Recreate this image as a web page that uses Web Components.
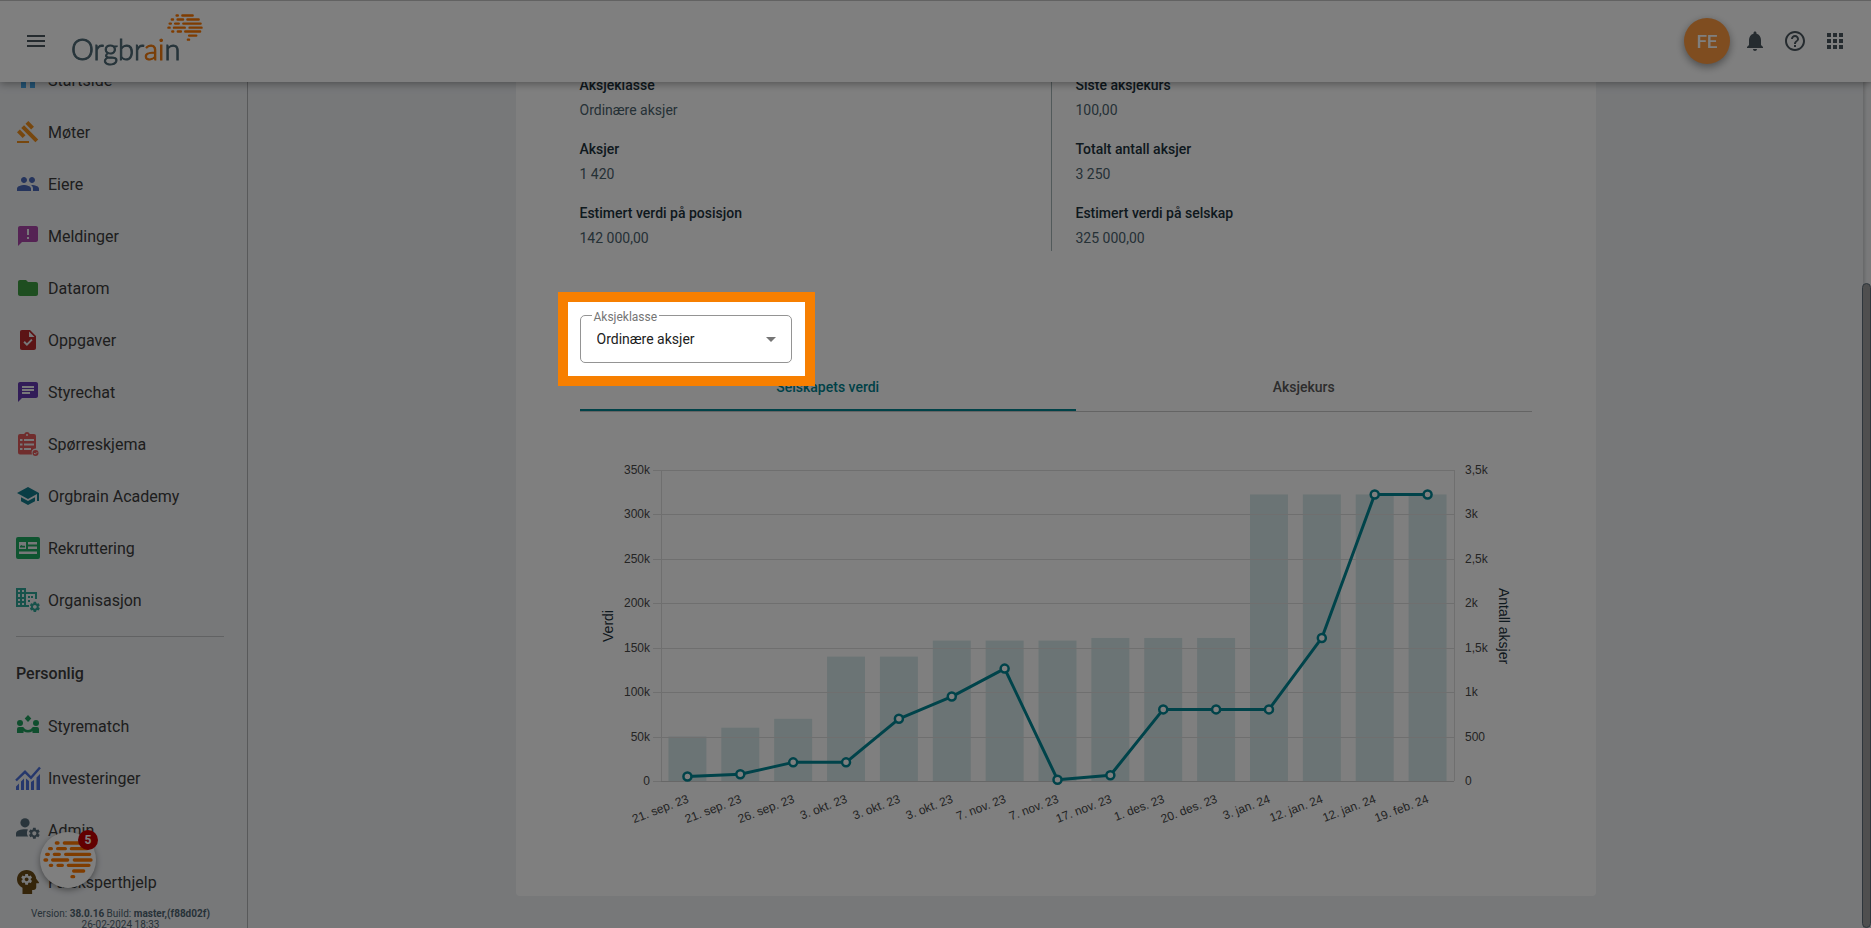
<!DOCTYPE html>
<html lang="nb">
<head>
<meta charset="utf-8">
<meta name="viewport" content="width=device-width, initial-scale=1">
<title>Orgbrain</title>
<style>
  html, body { height: 100%; margin: 0; }
  body { font-family: Roboto, "Liberation Sans", sans-serif; font-size: 14px; color: #263238; overflow: hidden; }
</style>
</head>
<body>
<ob-app></ob-app>
<chat-launcher count="5"></chat-launcher>
<tour-spotlight></tour-spotlight>

<script>
const GEAR = 'M19.14 12.94c.04-.3.06-.61.06-.94 0-.32-.02-.64-.07-.94l2.03-1.58c.18-.14.23-.41.12-.61l-1.92-3.32c-.12-.22-.37-.29-.59-.22l-2.39.96c-.5-.38-1.03-.7-1.62-.94l-.36-2.54c-.04-.24-.24-.41-.48-.41h-3.84c-.24 0-.43.17-.47.41l-.36 2.54c-.59.24-1.13.57-1.62.94l-2.39-.96c-.22-.08-.47 0-.59.22L2.74 8.87c-.12.21-.08.47.12.61l2.03 1.58c-.05.3-.09.63-.09.94s.02.64.07.94l-2.03 1.58c-.18.14-.23.41-.12.61l1.92 3.32c.12.22.37.29.59.22l2.39-.96c.5.38 1.03.7 1.62.94l.36 2.54c.05.24.24.41.48.41h3.84c.24 0 .44-.17.47-.41l.36-2.54c.59-.24 1.13-.56 1.62-.94l2.39.96c.22.08.47 0 .59-.22l1.92-3.32c.12-.22.07-.47-.12-.61l-2.01-1.58zM12 15.6c-1.98 0-3.6-1.62-3.6-3.6s1.62-3.6 3.6-3.6 3.6 1.62 3.6 3.6-1.62 3.6-3.6 3.6z';

const ICONS = {
  menu: '<path d="M3 18h18v-2H3v2zm0-5h18v-2H3v2zm0-7v2h18V6H3z"/>',
  bell: '<path d="M12 22c1.1 0 2-.9 2-2h-4c0 1.1.89 2 2 2zm6-6v-5c0-3.07-1.64-5.64-4.5-6.32V4c0-.83-.67-1.5-1.5-1.5s-1.5.67-1.5 1.5v.68C7.63 5.36 6 7.92 6 11v5l-2 2v1h16v-1l-2-2z"/>',
  help: '<path d="M11 18h2v-2h-2v2zm1-16C6.48 2 2 6.48 2 12s4.48 10 10 10 10-4.48 10-10S17.52 2 12 2zm0 18c-4.41 0-8-3.59-8-8s3.59-8 8-8 8 3.59 8 8-3.59 8-8 8zm0-14c-2.21 0-4 1.79-4 4h2c0-1.1.9-2 2-2s2 .9 2 2c0 2-3 1.75-3 5h2c0-2.25 3-2.5 3-5 0-2.21-1.79-4-4-4z"/>',
  apps: '<path d="M4 8h4V4H4v4zm6 12h4v-4h-4v4zm-6 0h4v-4H4v4zm0-6h4v-4H4v4zm6 0h4v-4h-4v4zm6-10v4h4V4h-4zm-6 4h4V4h-4v4zm6 6h4v-4h-4v4zm0 6h4v-4h-4v4z"/>',
  home: '<path d="M10 20v-6h4v6h5v-8h3L12 3 2 12h3v8z"/>',
  gavel: '<path d="M1 21h12v2H1zM5.245 8.07l2.83-2.827 14.14 14.142-2.828 2.828zM12.317 1l5.657 5.656-2.83 2.83-5.654-5.66zM3.825 9.485l5.657 5.657-2.828 2.828-5.657-5.657z"/>',
  people: '<path d="M16 11c1.66 0 2.99-1.34 2.99-3S17.66 5 16 5c-1.66 0-3 1.34-3 3s1.34 3 3 3zm-8 0c1.66 0 2.99-1.34 2.99-3S9.66 5 8 5C6.34 5 5 6.34 5 8s1.34 3 3 3zm0 2c-2.33 0-7 1.17-7 3.5V19h14v-2.5c0-2.33-4.67-3.5-7-3.5zm8 0c-.29 0-.62.02-.97.05 1.16.84 1.97 1.97 1.97 3.45V19h6v-2.5c0-2.33-4.67-3.5-7-3.5z"/>',
  feedback: '<path d="M20 2H4c-1.1 0-1.99.9-1.99 2L2 22l4-4h14c1.1 0 2-.9 2-2V4c0-1.1-.9-2-2-2z"/><path fill="#eef0f3" d="M13 15h-2v-2h2zM13 11h-2V5h2z"/>',
  folder: '<path d="M10 4H4c-1.1 0-1.99.9-1.99 2L2 18c0 1.1.9 2 2 2h16c1.1 0 2-.9 2-2V8c0-1.1-.9-2-2-2h-8l-2-2z"/>',
  task: '<path d="M14 2H6c-1.1 0-1.99.9-1.99 2L4 20c0 1.1.89 2 1.99 2H18c1.1 0 2-.9 2-2V8l-6-6zm-3.06 16L7.4 14.46l1.41-1.41 2.12 2.12 4.24-4.24 1.41 1.41L10.94 18zM13 9V3.5L18.5 9H13z"/>',
  chat: '<path d="M20 2H4c-1.1 0-1.99.9-1.99 2L2 22l4-4h14c1.1 0 2-.9 2-2V4c0-1.1-.9-2-2-2zM6 9h12v2H6V9zm8 5H6v-2h8v2zm4-6H6V6h12v2z"/>',
  form: '<path fill-rule="evenodd" d="M4 2h4.200a3 3 0 0 1 5.600 0H18a2 2 0 0 1 2 2v12.600a4 4 0 0 0-4 5.900H4a2 2 0 0 1-2-2V4a2 2 0 0 1 2-2zm7 0a1 1 0 1 0 0 2 1 1 0 0 0 0-2zM4 7v2h2.500V7zm4 0v2h10V7zm-4 4.500v2h2.500v-2zm4 0v2h10v-2zM4 16v2h2.500v-2zm4 0v2h7v-2z"/><circle cx="19.500" cy="21" r="3"/><path d="m18 21 1.200 1.200 2-2" fill="none" stroke="#eef0f3"/>',
  school: '<path d="M5 13.180v4L12 21l7-3.820v-4L12 17l-7-3.820zM12 3L1 9l11 6 9-4.910V17h2V9L12 3z"/>',
  recruit: '<path fill-rule="evenodd" d="M2 1h20a2 2 0 0 1 2 2v18a2 2 0 0 1-2 2H2a2 2 0 0 1-2-2V3a2 2 0 0 1 2-2zM3 6v7h7V6zm9 0v2.500h9V6zm0 4.500V13h9v-2.500zM3 15.500V18h18v-2.500z"/><path d="M4 11.500V10l1.500-1L7 10l1-.5 1 .5v1.500z"/>',
  org: '<path fill-rule="evenodd" d="M0 0h10v4h11v7h-2V6h-9v13H0zm2 2v2h2V2zm4 0v2h2V2zM2 6v3h2V6zm4 0v3h2V6zm-4 5v2h2v-2zm4 0v2h2v-2zm-4 4v2h2v-2zm4 0v2h2v-2zM12 8h2v2h-2zm3 0h2v2h-2zm-3 4h2v2h-2zm-2 5h3v2h-3z"/><path transform="translate(12.500 12.500) scale(.53)" d="' + GEAR + '"/>',
  match: '<circle cx="4" cy="9" r="3"/><circle cx="20" cy="9" r="3"/><path d="m12 1 3.300 3.500L12 8 8.700 4.500zM1 19v-4a2 2 0 0 1 2-2h3.500c1 0 1.300.6 1.800 1.300 1.600 2.200 5.800 2.200 7.400 0 .5-.7.8-1.300 1.800-1.300H21a2 2 0 0 1 2 2v4h-6.500v-1.800c-2.700 1.700-6.300 1.700-9 0V19z"/>',
  invest: '<path fill="none" stroke="currentColor" stroke-width="2.400" d="m0 14.500 9-8.700 6 6L24 1.500"/><path d="M0 20.500l3-3V24H0zM5 15.500l3-3V24H5zM10 12.500l3 2.500v9h-3zM15 16l3-2v10h-3zM20.500 11.500 24 8v16h-3.500z"/>',
  admin: '<circle cx="9" cy="4.800" r="4.600"/><path d="M0 18.500v-3c0-3 5-4.300 9-4.300 1.200 0 2 .1 3 .3-1.600 2.500-1.400 5 .2 7z"/><path transform="translate(11.500 8.500) scale(.57)" d="' + GEAR + '"/>',
  expert: '<path transform="translate(28.500 -4) scale(-1.375 1.333)" d="M13 8.57c-.79 0-1.43.64-1.43 1.43s.64 1.430 1.430 1.430 1.430-.64 1.430-1.430-.64-1.430-1.430-1.430zM13 3C9.250 3 6.200 5.940 6.020 9.640L4.100 12.200c-.25.33-.01.8.4.8H6v3c0 1.100.9 2 2 2h1v3h7v-4.680c2.360-1.120 4-3.530 4-6.320 0-3.870-3.130-7-7-7zm3 7c0 .13-.01.26-.02.39l.83.66c.08.06.1.16.05.25l-.8 1.390c-.05.09-.16.12-.24.09l-.99-.4c-.21.16-.43.29-.67.39L14 13.830c-.01.1-.1.17-.2.17h-1.600c-.1 0-.18-.07-.2-.17l-.15-1.060c-.25-.1-.47-.23-.68-.39l-.99.4c-.09.03-.2 0-.25-.09l-.8-1.390c-.05-.08-.03-.19.05-.25l.84-.66c-.01-.13-.02-.26-.02-.39s.02-.27.04-.39l-.85-.66c-.08-.06-.1-.16-.05-.26l.8-1.380c.05-.09.15-.12.24-.09l1 .4c.2-.15.43-.29.67-.39L12 6.170c.02-.1.1-.17.2-.17h1.600c.1 0 .18.07.2.17l.15 1.060c.24.1.46.23.67.39l1-.4c.09-.03.2 0 .24.09l.8 1.380c.05.09.03.2-.05.26l-.85.66c.03.12.04.25.04.39z"/>',
};

/* Orgbrain mark: rows of rounded dashes, [x1, x2, y]. */
const DASHES = [
  [169,174,609],[193,236,609],
  [149,154,626],[173,196,626],[214,261,626],
  [140,145,643],[163,178,643],[197,269,643],
  [135,140,660],[158,203,660],[223,273,660],
  [151,155,676],[174,187,676],[205,267,676],
  [221,251,693],
  [216,221,710],
];
const MARK = '<svg class="mark" viewBox="129 603 150 113" aria-hidden="true"><path fill="none" stroke="#ff7800" stroke-width="10" stroke-linecap="round" d="' +
  DASHES.map(([a, b, y]) => `M${a} ${y}H${b}`).join('') + '"/></svg>';

/* Base class: clones the subclass's markup into an open shadow root. */
class Base extends HTMLElement {
  constructor() {
    super();
    this.attachShadow({ mode: 'open' });
  }
  connectedCallback() {
    const t = document.createElement('template');
    t.innerHTML = '<style>*{box-sizing:border-box}' + this.css() + '</style>' + this.html();
    this.shadowRoot.replaceChildren(t.content.cloneNode(true));
    this.ready();
  }
  ready() {}
}

class ObIcon extends Base {
  css() { return ':host{display:block;width:24px;height:24px;flex:none}svg{display:block;width:100%;height:100%;overflow:visible}'; }
  html() { return `<svg viewBox="0 0 24 24" fill="currentColor" aria-hidden="true">${ICONS[this.getAttribute('name')]}</svg>`; }
}

class ObLogo extends Base {
  css() { return `
    :host{display:block}
    a{display:flex;color:#4d6874;text-decoration:none;font:300 29px/38px Lato,"Open Sans",sans-serif;-webkit-text-stroke:1px;position:relative;padding-top:30px;height:82px}
    b{font-weight:300;color:#f27a0c}
    .mark{position:absolute;left:96px;top:14px;width:36px}`; }
  html() { return `<a href="#" aria-label="Orgbrain"><span>Orgbr<b>ai</b>n</span>${MARK}</a>`; }
}

class ObHeader extends Base {
  css() { return `
    :host{display:flex;align-items:center;height:82px;padding:0 24px 1px;background:#fff;border-top:1px solid #c4c4c4;
      box-shadow:0 2px 8px rgba(0,0,0,.35);position:relative;z-index:2;color:#4a565e}
    button{border:0;background:none;padding:0;color:inherit;font-family:inherit;display:block}
    ob-logo{margin-left:23px}
    .actions{margin-left:auto;display:flex;align-items:center;gap:16px}
    .avatar{width:46px;height:46px;border-radius:50%;background:#ff9a40;color:#fff;font-size:19px;font-weight:500;
      box-shadow:0 3px 8px rgba(0,0,0,.4);margin-right:-3px}`; }
  html() { return `
    <button aria-label="Meny"><ob-icon name="menu"></ob-icon></button>
    <ob-logo></ob-logo>
    <div class="actions">
      <button class="avatar">FE</button>
      <button aria-label="Varsler"><ob-icon name="bell"></ob-icon></button>
      <button aria-label="Hjelp"><ob-icon name="help"></ob-icon></button>
      <button aria-label="Apper"><ob-icon name="apps"></ob-icon></button>
    </div>`; }
}

class NavItem extends Base {
  css() { return `
    :host{display:block}
    a{display:flex;align-items:center;gap:8px;height:52px;padding:0 16px;color:#3c3c3c;text-decoration:none;font-size:16px;white-space:nowrap}
    ob-icon{color:var(--icon)}`; }
  html() { return `<a href="#"><ob-icon name="${this.getAttribute('icon')}"></ob-icon><slot></slot></a>`; }
}

const NAV = [
  ['home', '#4aa8e8', 'Startside'], ['gavel', '#ef8f1c', 'Møter'], ['people', '#4a68b8', 'Eiere'],
  ['feedback', '#ab47a8', 'Meldinger'], ['folder', '#3d9c40', 'Datarom'], ['task', '#b8282b', 'Oppgaver'],
  ['chat', '#6238b0', 'Styrechat'], ['form', '#e05a5a', 'Spørreskjema'], ['school', '#127a8a', 'Orgbrain Academy'],
  ['recruit', '#1fa860', 'Rekruttering'], ['org', '#2fa596', 'Organisasjon'],
];
const PERSONAL = [
  ['match', '#1f9d5c', 'Styrematch'], ['invest', '#4a6ed8', 'Investeringer'],
  ['admin', '#546a78', 'Admin'], ['expert', '#6b4a14', 'Få eksperthjelp'],
];
const navItems = list => '<nav>' + list.map(([i, c, t]) => `<nav-item icon="${i}" style="--icon:${c}">${t}</nav-item>`).join('') + '</nav>';

class ObSidebar extends Base {
  css() { return `
    :host{display:block;overflow:hidden auto;scrollbar-width:none;background:#eef0f3;border-right:1px solid #b0b2b5;padding:8px 0 24px}
    hr{border:0;height:1px;background:#c2c4c7;margin:10px 23px 0 16px}
    h2{margin:0;padding:10px 16px 0;font-size:16px;line-height:53px;font-weight:500;color:#3c3c3c}
    p{margin:0;padding-right:6px;text-align:center;font-size:10px;line-height:11px;color:#4f6470}
    b{font-weight:700}`; }
  html() { return `${navItems(NAV)}<hr><h2>Personlig</h2>${navItems(PERSONAL)}
    <p>Version: <b>38.0.16</b> Build: <b>master,(f88d02f)</b><br>26-02-2024 18:33</p>`; }
  ready() { requestAnimationFrame(() => { this.scrollTop = 36; }); this.scrollTop = 36; }
}

class ShareFacts extends Base {
  css() { return `
    :host{display:grid;grid-template-columns:calc(50% - 4px) 1fr}
    dl{margin:0;display:grid;gap:14px;line-height:25px}
    dl:first-of-type{border-right:1px solid #a4b4b6}
    dl + dl{padding-left:24px}
    dt{font-weight:500;color:#1d323c}
    dd{margin:0;color:#4b626d}`; }
  html() {
    const col = rows => '<dl>' + rows.map(([k, v]) => `<div><dt>${k}</dt><dd>${v}</dd></div>`).join('') + '</dl>';
    return col([['Aksjeklasse', 'Ordinære aksjer'], ['Aksjer', '1 420'], ['Estimert verdi på posisjon', '142 000,00']]) +
      col([['Siste aksjekurs', '100,00'], ['Totalt antall aksjer', '3 250'], ['Estimert verdi på selskap', '325 000,00']]);
  }
}

class SelectField extends Base {
  css() { return `
    :host{display:block;position:relative;width:212px}
    select{display:block;appearance:none;width:100%;height:48px;border:1px solid #949494;border-radius:5px;background:#fff;
      padding:0 40px 0 16px;font:14px Roboto,sans-serif;color:#212121}
    label{position:absolute;left:12px;top:-5px;padding:0 2px;background:#fff;font-size:12px;line-height:14px;color:#757575}
    svg{position:absolute;right:16px;top:22px;width:10px;height:5px;fill:#757575;pointer-events:none}`; }
  html() { return `<select id="s"><option>${this.getAttribute('value')}</option></select>
    <label for="s"><slot></slot></label><svg viewBox="0 0 10 5" aria-hidden="true"><path d="M0 0h10L5 5z"/></svg>`; }
}

class ValueTabs extends Base {
  css() { return `
    :host{display:flex}
    button{flex:1 1 auto;height:49px;border:0;border-bottom:1px solid #c8c8c8;padding:0 24px;background:none;
      font:500 14px Roboto,sans-serif;color:#5a5a5a}
    [aria-selected=true]{color:#00838f;box-shadow:inset 0 -2px #008490}`; }
  html() { return `<button role="tab" aria-selected="true">Selskapets verdi</button><button role="tab" aria-selected="false">Aksjekurs</button>`; }
  ready() { this.setAttribute('role', 'tablist'); }
}

class ValueChart extends Base {
  css() { return `
    :host{display:block}
    svg{display:block;width:100%;height:auto;font-family:"Liberation Sans",Arial,sans-serif;font-size:12px;fill:#484848}
    .grid{stroke:#dfdfdf;fill:none}
    .axis{stroke:#cfcfcf;fill:none}
    .bars{fill:#00737a;fill-opacity:.16}
    .line{stroke:#008694;stroke-width:3;fill:none;stroke-linejoin:round}
    .dots{stroke:#008694;stroke-width:2.500;fill:#fff}
    .title{font-size:14px;fill:#1d323c;text-anchor:middle}`; }
  html() {
    const left = 81, right = 874, top = 18, bottom = 329, step = (right - left) / 15;
    const labels = ['21. sep. 23','21. sep. 23','26. sep. 23','3. okt. 23','3. okt. 23','3. okt. 23','7. nov. 23','7. nov. 23',
      '17. nov. 23','1. des. 23','20. des. 23','3. jan. 24','12. jan. 24','12. jan. 24','19. feb. 24'];
    const shares = [500,600,700,1400,1400,1580,1580,1580,1610,1610,1610,3225,3225,3225,3225];
    const value = [5,7.5,21,21,70,95,126.5,1.5,6.5,80.6,80.6,80.6,161,322.5,322.5];
    const shareTicks = ['0','500','1k','1,5k','2k','2,5k','3k','3,5k'];
    const x = i => left + step * (i + .5);
    const y = f => bottom - f * (bottom - top);
    let grid = '', text = '';
    for (let k = 0; k < 8; k++) {
      const gy = Math.round(y(k / 7));
      grid += `M${left - 8} ${gy + .5}H${right}`;
      text += `<text x="70" y="${gy + 4}" text-anchor="end">${k ? k * 50 + 'k' : '0'}</text><text x="885" y="${gy + 4}">${shareTicks[k]}</text>`;
    }
    const pts = value.map((v, i) => [x(i), y(v / 350)]);
    return `<svg viewBox="0 0 952 380" role="img" aria-label="Selskapets verdi">
      <g class="bars">${shares.map((s, i) => `<rect x="${x(i) - 19}" y="${y(s / 3500)}" width="38" height="${bottom - y(s / 3500)}"/>`).join('')}</g>
      <path class="grid" d="${grid}M${left + .5} ${top}V${bottom}M${right + .5} ${top}V${bottom}"/>
      <path class="axis" d="M${left} ${bottom + .5}H${right}"/>
      <polyline class="line" points="${pts.join(' ')}"/>
      <g class="dots">${pts.map(p => `<circle cx="${p[0]}" cy="${p[1]}" r="4"/>`).join('')}</g>
      ${text}
      ${labels.map((t, i) => `<text transform="translate(${x(i) + 2} ${bottom + 21}) rotate(-21)" text-anchor="end">${t}</text>`).join('')}
      <text class="title" transform="translate(33 174) rotate(-90)">Verdi</text>
      <text class="title" transform="translate(919 174) rotate(90)">Antall aksjer</text>
    </svg>`;
  }
}

class SharePage extends Base {
  css() { return `
    :host{display:block;overflow:hidden auto;scrollbar-width:none;background:#eef0f3;padding:24px 24px 32px}
    section{max-width:1080px;margin:0 auto;background:#fff;border-radius:4px;padding:64px}
    select-field{margin-top:64px}
    value-chart{margin-top:40px}`; }
  html() { return `<section>
      <share-facts></share-facts>
      <select-field value="Ordinære aksjer">Aksjeklasse</select-field>
      <value-tabs></value-tabs>
      <value-chart></value-chart>
    </section>`; }
  ready() { requestAnimationFrame(() => { this.scrollTop = this.scrollHeight; }); this.scrollTop = this.scrollHeight; }
}

class ScrollRail extends Base {
  css() { return `
    :host{display:flex;flex-direction:column;width:8px;background:#f2f3f5;box-shadow:inset 2px 0 3px rgba(0,0,0,.15)}
    i{margin-left:-1px;flex:1;border:1px solid #5c6d78;border-radius:5px;background:#9e9e9e}
    :host::before{content:"";flex:0 0 calc(24% - 2px)}`; }
  html() { return '<i></i>'; }
}

class ObApp extends Base {
  css() { return `
    :host{display:grid;grid-template:auto 1fr / 248px 1fr auto;height:100vh;background:#eef0f3}
    ob-header{grid-column:1/-1}
    ob-sidebar,share-page{min-height:0}`; }
  html() { return '<ob-header></ob-header><ob-sidebar></ob-sidebar><share-page></share-page><scroll-rail></scroll-rail>'; }
}

class ChatLauncher extends Base {
  css() { return `
    :host{position:fixed;left:40px;bottom:40px;z-index:5}
    button{display:grid;place-items:center;width:56px;height:56px;border:0;border-radius:50%;background:#fff;padding:0;
      box-shadow:0 2px 6px rgba(0,0,0,.4)}
    .mark{width:50px}
    span{position:absolute;right:-2px;top:-2px;width:20px;height:20px;border-radius:50%;background:#c40000;color:#fff;
      font:700 12px/20px Roboto,sans-serif;text-align:center}`; }
  html() { return `<button aria-label="Chat">${MARK}</button><span>${this.getAttribute('count')}</span>`; }
}

/* Dims the page and frames the share class field for the guided tour. */
class TourSpotlight extends Base {
  css() { return `
    :host{position:fixed;z-index:10;border:10px solid #f77f00;pointer-events:none;box-shadow:0 0 0 9999px rgba(0,0,0,.5)}`; }
  html() { return ''; }
  ready() {
    const page = document.querySelector('ob-app').shadowRoot.querySelector('share-page');
    const place = () => {
      const r = page.shadowRoot.querySelector('select-field').getBoundingClientRect();
      Object.assign(this.style, { left: r.left - 22 + 'px', top: r.top - 23 + 'px', width: r.width + 25 + 'px', height: r.height + 26 + 'px' });
    };
    place();
    requestAnimationFrame(place);
    addEventListener('resize', place);
    page.addEventListener('scroll', place);
  }
}

for (const [tag, cls] of Object.entries({
  'ob-icon': ObIcon, 'ob-logo': ObLogo, 'ob-header': ObHeader, 'nav-item': NavItem, 'ob-sidebar': ObSidebar,
  'share-facts': ShareFacts, 'select-field': SelectField, 'value-tabs': ValueTabs, 'value-chart': ValueChart,
  'share-page': SharePage, 'scroll-rail': ScrollRail, 'ob-app': ObApp, 'chat-launcher': ChatLauncher, 'tour-spotlight': TourSpotlight,
})) customElements.define(tag, cls);
</script>
</body>
</html>
